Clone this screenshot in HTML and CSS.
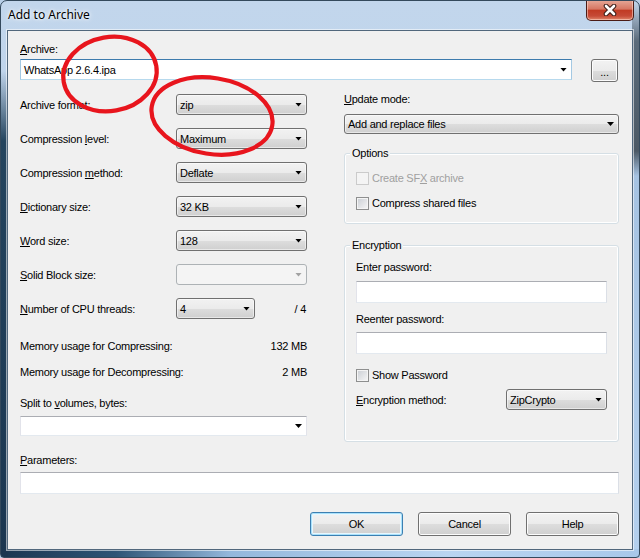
FILE: index.html
```html
<!DOCTYPE html>
<html lang="en">
<head>
  <meta charset="UTF-8">
  <meta name="viewport" content="width=device-width, initial-scale=1.0">

  <title>Add to Archive</title>

  <link rel="stylesheet" href="styles.css">
</head>
<body>

  <div id="Window" class="Window">
    <div id="WindowTitleBar" class="WindowTitleBar">
      <span id="WindowTitle" class="WindowTitle">Add to Archive</span>
      <span id="WindowClose" class="WindowClose">
        <svg width="14" height="12" viewBox="0 0 14 12">
          <path d="M3 2 L11 10 M11 2 L3 10" stroke="#3b1d18" stroke-width="4.6" stroke-linecap="round"/>
          <path d="M3 2 L11 10 M11 2 L3 10" stroke="#fff" stroke-width="2.6" stroke-linecap="round"/>
        </svg>
      </span>
    </div>

    <div id="Client" class="Client">
      <div class="Label"><u>A</u>rchive:</div>
      <div class="ArchiveRow">
        <div id="cboArchive" class="EditCombo EditCombo-focus">WhatsApp 2.6.4.ipa</div>
        <div id="btnBrowse" class="Button ButtonBrowse">...</div>
      </div>

      <div class="Columns">
        <div class="ColumnLeft">
          <div class="Row"><span class="RowLabel">Archive format:</span><div class="Combo">zip</div></div>
          <div class="Row"><span class="RowLabel">Compression <u>l</u>evel:</span><div class="Combo">Maximum</div></div>
          <div class="Row"><span class="RowLabel">Compression <u>m</u>ethod:</span><div class="Combo">Deflate</div></div>
          <div class="Row"><span class="RowLabel"><u>D</u>ictionary size:</span><div class="Combo">32 KB</div></div>
          <div class="Row"><span class="RowLabel"><u>W</u>ord size:</span><div class="Combo">128</div></div>
          <div class="Row"><span class="RowLabel"><u>S</u>olid Block size:</span><div class="Combo Combo-disabled"></div></div>
          <div class="Row Row-cpu"><span class="RowLabel"><u>N</u>umber of CPU threads:</span><div class="Combo Combo-small">4</div><span class="RowExtra">/ 4</span></div>

          <div class="InfoRow"><span>Memory usage for Compressing:</span><span>132 MB</span></div>
          <div class="InfoRow"><span>Memory usage for Decompressing:</span><span>2 MB</span></div>

          <div class="Label SplitLabel">Split to <u>v</u>olumes, bytes:</div>
          <div id="cboSplit" class="EditCombo EditCombo-split"></div>
        </div> <!-- End ColumnLeft -->

        <div class="ColumnRight">
          <div class="Label UpdateLabel"><u>U</u>pdate mode:</div>
          <div class="Combo Combo-wide">Add and replace files</div>

          <div id="grpOptions" class="Group GroupOptions">
            <span class="GroupTitle">Options</span>
            <div class="CheckRow CheckRow-disabled"><span class="Check"></span><span>Create SF<u>X</u> archive</span></div>
            <div class="CheckRow"><span class="Check"></span><span>Compress shared files</span></div>
          </div>

          <div id="grpEncryption" class="Group GroupEncryption">
            <span class="GroupTitle">Encryption</span>
            <div class="Label PassLabel">Enter password:</div>
            <div class="TextBox PassBox"></div>
            <div class="Label PassLabel PassLabel-second">Reenter password:</div>
            <div class="TextBox PassBox PassBox-second"></div>
            <div class="CheckRow ShowPass"><span class="Check"></span><span>Show Password</span></div>
            <div class="Row EncRow"><span><u>E</u>ncryption method:</span><div class="Combo Combo-enc">ZipCrypto</div></div>
          </div>
        </div> <!-- End ColumnRight -->
      </div> <!-- End Columns -->

      <div class="Label ParamLabel"><u>P</u>arameters:</div>
      <div class="TextBox ParamBox"></div>

      <div class="ButtonRow">
        <div id="btnOk" class="Button Button-default">OK</div>
        <div id="btnCancel" class="Button">Cancel</div>
        <div id="btnHelp" class="Button">Help</div>
      </div>
    </div> <!-- End Client -->

    <svg class="Annotations" width="640" height="558" viewBox="0 0 640 558">
      <ellipse cx="110" cy="74" rx="47" ry="37" transform="rotate(-10 110 74)"/>
      <ellipse cx="212" cy="116" rx="61" ry="38" transform="rotate(9 212 116)"/>
    </svg>
  </div>

</body>
</html>
```

FILE: styles.css
```css
body {
  margin: 0;
  background-color: #b8cfe8;
  font-family: "Liberation Sans", Arial, sans-serif;
  font-size: 11px;
  letter-spacing: -0.25px;
  color: #000;
}
u {
  text-decoration: underline;
  text-underline-offset: 1px;
}

/* window frame */
.Window {
  position: relative;
  width: 640px;
  height: 558px;
  box-sizing: border-box;
  border: 1px solid #34495c;
  border-radius: 7px 7px 4px 4px;
  overflow: hidden;
  display: flex;
  flex-direction: column;
  background:
    linear-gradient(to bottom, rgba(40,70,95,0) 0, rgba(40,70,95,0) 70px, #24445e 140px, #1b3650 100%) left top / 7px 100% no-repeat,
    linear-gradient(to right, #1b3650 0, #2f5576 18%, #94b8dc 36%, #b9d5f1 70%, #a8c8ea 100%) left bottom / 100% 8px no-repeat,
    linear-gradient(to bottom, rgba(80,95,110,0) 0, #5c6c7b 40px, #4c5965 150px, #a6c3e2 175px, #b4d0ee 100%) right top / 7px 100% no-repeat,
    linear-gradient(to bottom, #c2d6ec 0, #b3cde9 100%);
}
.WindowTitleBar {
  height: 29px;
  display: flex;
  align-items: flex-start;
}
.WindowTitle {
  font-family: "Noto Sans", sans-serif;
  font-size: 12px;
  letter-spacing: 0;
  line-height: 16px;
  margin: 6px 0 0 7px;
  text-shadow: 0 0 6px #fff, 0 0 3px #fff;
}
.WindowClose {
  margin: -1px 5px 0 auto;
  width: 48px;
  height: 21px;
  box-sizing: border-box;
  display: flex;
  align-items: center;
  justify-content: center;
  border: 1px solid #4b1c16;
  border-top: 0;
  border-radius: 0 0 5px 5px;
  background: linear-gradient(to bottom, #e6a999 0, #d67763 45%, #c13b24 52%, #c64a36 80%, #e0866a 100%);
  box-shadow: inset 0 0 0 1px rgba(255,220,210,.55);
}

/* client area */
.Client {
  margin: 0 6px;
  height: 520px;
  box-sizing: border-box;
  border: 1px solid #51677c;
  box-shadow: 0 0 0 1px rgba(255,255,255,.55);
  background-color: #f0f0f0;
  padding: 12px 13px 0 12px;
}
.Label {
  line-height: 13px;
  height: 13px;
}
.ArchiveRow {
  display: flex;
  gap: 19px;
  margin-top: 3px;
  height: 23px;
}

/* controls */
.Combo, .EditCombo {
  height: 21px;
  box-sizing: border-box;
  display: flex;
  align-items: center;
  padding: 0 4px 0 3px;
  white-space: nowrap;
}
.Combo::after, .EditCombo::after {
  content: "";
  margin-left: auto;
  width: 7px;
  height: 4px;
  background-color: #000;
  clip-path: polygon(0 0, 100% 0, 50% 100%);
}
.Combo {
  width: 131px;
  border: 1px solid #707070;
  border-radius: 3px;
  background: linear-gradient(to bottom, #f2f2f2 0, #ebebeb 50%, #dddddd 51%, #cfcfcf 100%);
  box-shadow: inset 0 0 0 1px rgba(255,255,255,.5);
}
.Combo-disabled {
  border-color: #adb2b5;
  background: #f4f4f4;
  box-shadow: none;
}
.Combo-disabled::after {
  background-color: #a2a2a2;
}
.Combo-small {
  width: 79px;
}
.Combo-wide {
  width: 100%;
  height: 20px;
  margin-top: 8px;
}
.Combo-enc {
  width: 101px;
  margin-left: auto;
}
.EditCombo {
  flex: 1;
  background-color: #fff;
  border: 1px solid;
  border-color: #abadb3 #e2e3ea #e3e9ef #e2e3ea;
}
.EditCombo-focus {
  border-color: #3d7bad #a4c9e3 #b7d9ed #a4c9e3;
}
.EditCombo-split {
  height: 20px;
  margin-top: 6px;
}
.TextBox {
  height: 22px;
  box-sizing: border-box;
  background-color: #fff;
  border: 1px solid;
  border-color: #abadb3 #dbdfe6 #e3e9ef #e2e3ea;
}
.Button {
  width: 93px;
  height: 24px;
  box-sizing: border-box;
  display: flex;
  align-items: center;
  justify-content: center;
  border: 1px solid #707070;
  border-radius: 3px;
  background: linear-gradient(to bottom, #f2f2f2 0, #ebebeb 50%, #dddddd 51%, #cfcfcf 100%);
  box-shadow: inset 0 0 0 1px #fcfcfc;
}
.Button-default {
  border-color: #3c7fb1;
  box-shadow: inset 0 0 0 1px #a9e1fb, inset 0 0 0 2px #e8f6fd;
}
.ButtonBrowse {
  width: 27px;
  height: 23px;
  margin-right: 1px;
  padding-top: 3px;
}

/* columns */
.Columns {
  display: grid;
  grid-template-columns: 287px 275px;
  column-gap: 37px;
}
.ColumnLeft {
  padding-top: 12px;
}
.Row {
  display: flex;
  align-items: center;
  height: 21px;
  margin-bottom: 13px;
}
.RowLabel {
  width: 156px;
}
.RowExtra {
  margin-left: auto;
  padding-right: 1px;
}
.Row-cpu {
  margin-bottom: 21px;
}
.InfoRow {
  display: flex;
  justify-content: space-between;
  line-height: 13px;
}
.InfoRow + .InfoRow {
  margin-top: 13px;
}
.SplitLabel {
  margin-top: 18px;
}
.UpdateLabel {
  margin-top: 11px;
}

/* group boxes */
.Group {
  border: 1px solid #d5dfe5;
  border-radius: 3px;
  box-shadow: inset 0 0 0 1px #fff;
  padding: 0 11px 13px 11px;
}
.GroupTitle {
  display: block;
  width: fit-content;
  margin: -7px 0 0 -6px;
  padding: 0 2px;
  line-height: 13px;
  background-color: #f0f0f0;
}
.GroupOptions {
  margin-top: 19px;
}
.GroupEncryption {
  margin-top: 21px;
  padding-bottom: 31px;
}
.CheckRow {
  display: flex;
  align-items: center;
  gap: 3px;
  height: 13px;
  line-height: 13px;
  margin-top: 12px;
}
.Check {
  width: 13px;
  height: 13px;
  box-sizing: border-box;
  border: 1px solid #8e8f8f;
  background: linear-gradient(135deg, #c9cdd3 0, #f7f7f7 100%);
  box-shadow: inset 0 0 0 1px #f4f4f4;
}
.CheckRow-disabled {
  color: #a0a0a0;
}
.CheckRow-disabled .Check {
  border-color: #cbcbcb;
  background: #f4f4f4;
  box-shadow: none;
}
.PassLabel {
  margin-top: 9px;
}
.PassLabel-second {
  margin-top: 10px;
}
.PassBox {
  margin-top: 7px;
}
.PassBox-second {
  margin-top: 6px;
}
.ShowPass {
  margin-top: 15px;
}
.EncRow {
  margin: 7px 0 0 0;
}

/* bottom */
.ParamLabel {
  margin-top: 12px;
}
.ParamBox {
  margin-top: 5px;
}
.ButtonRow {
  display: flex;
  justify-content: flex-end;
  gap: 15px;
  margin-top: 18px;
}

/* red marks drawn over the dialog */
.Annotations {
  position: absolute;
  left: -1px;
  top: -1px;
  pointer-events: none;
}
.Annotations ellipse {
  fill: none;
  stroke: #e8151d;
  stroke-width: 4.2;
}
```
